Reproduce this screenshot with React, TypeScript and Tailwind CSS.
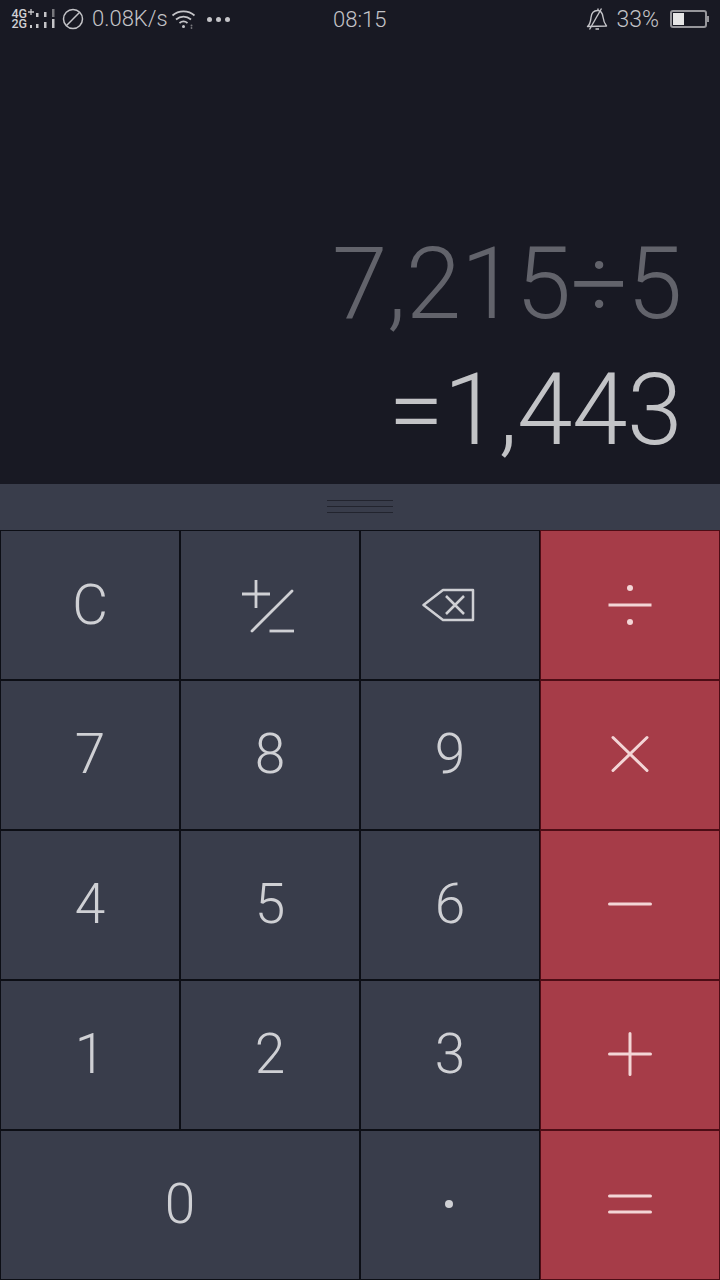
const font = { fontFamily: "Roboto, 'Liberation Sans', sans-serif" };

function Signal() {
  return (
    <svg width="46" height="28" viewBox="0 -3 46 28" className="block">
      <text x="0.500" y="9.500" fontSize="12.500" fontWeight="500" fill="#d0d0d3" fontFamily="Roboto, sans-serif">4G</text>
      <text x="0.500" y="20" fontSize="12.500" fontWeight="500" fill="#d0d0d3" fontFamily="Roboto, sans-serif">2G</text>
      <path d="M20 1v6M17 4h6" stroke="#c9c9cc" strokeWidth="1.300" />
      <rect x="19" y="17" width="2" height="3" fill="#c9c9cc" />
      <g fill="#c4c4c7">
        <rect x="25" y="5" width="2.500" height="4" />
        <rect x="33" y="4" width="2.500" height="5" />
        <rect x="25" y="16" width="2.500" height="4" />
        <rect x="33" y="14" width="2.500" height="6" />
      </g>
      <rect x="41" y="1" width="2.500" height="8" fill="#77777c" />
      <rect x="41" y="11" width="2.500" height="9" fill="#c4c4c7" />
    </svg>
  );
}

function StatusBar() {
  return (
    <div className="relative h-[38px] flex items-center justify-between pl-[11px] pr-[11px] text-[#c4c4c8] text-[22px] font-light" style={font}>
      <div className="flex items-center">
        <Signal />
        <svg width="22" height="22" viewBox="0 0 22 22" className="ml-[5px]" fill="none" stroke="#c4c4c8" strokeWidth="1.500">
          <circle cx="11" cy="11" r="9.500" />
          <path d="M4.300 17.700 17.700 4.300" />
        </svg>
        <span className="ml-[8px] leading-none">0.08K/s</span>
        <svg width="26" height="20" viewBox="0 0 26 20" className="ml-[3px]" fill="none" stroke="#c4c4c8" strokeWidth="1.700">
          <path d="M1.500 6.500C7.500 1 17.500 1 23.500 6.500" />
          <path d="M5 10.500c4.500-3.800 10.500-3.800 15 0" />
          <path d="M8.500 14c2.500-2 5.500-2 8 0" />
          <circle cx="12.500" cy="17.500" r="1.500" fill="#c4c4c8" stroke="none" />
          <circle cx="20.500" cy="16.500" r="1" fill="#77777c" stroke="none" />
          <circle cx="20.500" cy="19" r="0.900" fill="#77777c" stroke="none" />
        </svg>
        <div className="ml-[10px] flex gap-[4px]">
          <div className="w-[5px] h-[5px] rounded-full bg-[#c4c4c8]" />
          <div className="w-[5px] h-[5px] rounded-full bg-[#c4c4c8]" />
          <div className="w-[5px] h-[5px] rounded-full bg-[#c4c4c8]" />
        </div>
      </div>
      <span className="absolute left-[333px] top-[9px] leading-none">08:15</span>
      <div className="flex items-center">
        <svg width="22" height="24" viewBox="0 0 22 24" fill="none" stroke="#c4c4c8" strokeWidth="1.400" strokeLinejoin="round">
          <path d="M1.500 19.500c3-2.500 3-5 3.500-9C5.500 6 8 3.500 11.500 3.500s5 3 5.500 6.500c.5 4 1.500 6.500 3.500 9z" />
          <path d="M12 1.500v2M9.500 22h3.500" />
          <path d="M15.500 1.500 3.500 22.500" />
        </svg>
        <span className="ml-[8px] leading-none text-[23px]">33%</span>
        <div className="ml-[11px] flex items-center">
          <div className="w-[37px] h-[18px] rounded-[3px] border-2 border-[#96969b] p-[1px]">
            <div className="w-[11px] h-full bg-[#e6e6e6]" />
          </div>
          <div className="w-[2px] h-[6px] bg-[#96969b]" />
        </div>
      </div>
    </div>
  );
}

function Display() {
  return (
    <div className="h-[446px] flex flex-col items-end pr-[38px] font-light text-[100px] leading-none tracking-[-0.5px]" style={font}>
      <div className="mt-[196px] text-[#62636b] whitespace-nowrap">7,215÷5</div>
      <div className="mt-[26px] text-[#c2c3c6] whitespace-nowrap">=1,443</div>
    </div>
  );
}

function Handle() {
  return (
    <div className="h-[46px] bg-[#393d4b] flex flex-col items-center justify-center gap-[5px] pb-[1px]">
      <div className="w-[66px] h-px bg-[#22242e]" />
      <div className="w-[66px] h-px bg-[#22242e]" />
      <div className="w-[66px] h-px bg-[#22242e]" />
    </div>
  );
}

function Key({ children, red, wide }: { children: React.ReactNode; red?: boolean; wide?: boolean }) {
  return (
    <div
      className={
        "flex items-center justify-center border " +
        (red ? "bg-[#a63c48] border-[#4d0c15] " : "bg-[#393d4b] border-[#0c0e15] ") +
        (wide ? "col-span-2" : "")
      }
    >
      {children}
    </div>
  );
}

function Digit({ c, flush }: { c: string; flush?: boolean }) {
  return <span className={"text-[55px] leading-none font-light text-[#cfd0d4] " + (flush ? "" : "mb-[2px]")} style={font}>{c}</span>;
}

function Op({ children, up }: { children: React.ReactNode; up?: boolean }) {
  return (
    <svg width="60" height="60" viewBox="0 0 60 60" fill="none" stroke="#f3d5d6" strokeWidth="3" strokeLinecap="round" className={up ? "mb-[3px]" : ""}>
      {children}
    </svg>
  );
}

function Keypad() {
  return (
    <div className="grid grid-cols-4 grid-rows-5 h-[750px]">
      <Key><Digit c="C" flush /></Key>
      <Key>
        <svg width="60" height="60" viewBox="0 0 60 60" fill="none" stroke="#cfd0d4" strokeWidth="2.800">
          <path d="M2 19h28M16 5v28" />
          <path d="M12 56 52 16" strokeLinecap="round" />
          <path d="M29.500 56H54" />
        </svg>
      </Key>
      <Key>
        <svg width="56" height="36" viewBox="0 0 56 36" fill="none" stroke="#cfd0d4" strokeWidth="2.500" strokeLinejoin="round">
          <path d="M1.500 18 21 3h30v30H21z" />
          <path d="M24 9l18 18M42 9 24 27" />
        </svg>
      </Key>
      <Key red>
        <Op>
          <path d="M8.500 30h43" strokeLinecap="butt" />
          <circle cx="30" cy="13" r="3" fill="#f3d5d6" stroke="none" />
          <circle cx="30" cy="47" r="3" fill="#f3d5d6" stroke="none" />
        </Op>
      </Key>

      <Key><Digit c="7" /></Key>
      <Key><Digit c="8" /></Key>
      <Key><Digit c="9" /></Key>
      <Key red>
        <Op up><path d="M13 13.500 47 46.500M47 13.500 13 46.500" /></Op>
      </Key>

      <Key><Digit c="4" /></Key>
      <Key><Digit c="5" /></Key>
      <Key><Digit c="6" /></Key>
      <Key red>
        <Op up><path d="M9.500 30h41" /></Op>
      </Key>

      <Key><Digit c="1" /></Key>
      <Key><Digit c="2" /></Key>
      <Key><Digit c="3" /></Key>
      <Key red>
        <Op up><path d="M9.500 30h41M30 9.500v41" /></Op>
      </Key>

      <Key wide><Digit c="0" /></Key>
      <Key>
        <div className="w-[8px] h-[8px] rounded-full bg-[#cfd0d4] mr-[2px] mb-[2px]" />
      </Key>
      <Key red>
        <Op><path d="M9.500 21h41M9.500 37h41" /></Op>
      </Key>
    </div>
  );
}

export default function App() {
  return (
    <div className="w-[720px] h-[1280px] bg-[#181923] overflow-hidden">
      <StatusBar />
      <Display />
      <Handle />
      <Keypad />
    </div>
  );
}
